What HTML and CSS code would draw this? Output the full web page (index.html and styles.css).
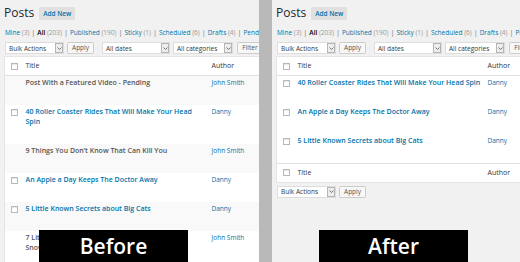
FILE: index.html
```html
<!DOCTYPE html>
<html lang="en">
<head>
    <meta charset="UTF-8">
    <title>Posts - Before / After</title>
    <link rel="stylesheet" href="styles.css">
</head>
<body>
<div class="shot">
    <section class="panel before">
        <div class="wrap">
            <div class="page-head">
                <h1>Posts</h1>
                <a class="add-new">Add New</a>
            </div>
            <div class="subsubsub">
                <a>Mine <span class="count">(3)</span></a><span class="sep">|</span>
                <a class="current">All <span class="count">(203)</span></a><span class="sep">|</span>
                <a>Published <span class="count">(190)</span></a><span class="sep">|</span>
                <a>Sticky <span class="count">(1)</span></a><span class="sep">|</span>
                <a>Scheduled <span class="count">(6)</span></a><span class="sep">|</span>
                <a>Drafts <span class="count">(4)</span></a><span class="sep">|</span>
                <a>Pending <span class="count">(2)</span></a>
            </div>
            <div class="tablenav">
                <div class="select bulk">Bulk Actions<span class="arrow"><svg width="5" height="3" viewBox="0 0 5 3"><path d="M0.5 0.5L2.5 2.5L4.5 0.5" fill="none" stroke="#555" stroke-width="0.8"/></svg></span></div>
                <div class="button apply">Apply</div>
                <div class="select dates">All dates<span class="arrow"><svg width="5" height="3" viewBox="0 0 5 3"><path d="M0.5 0.5L2.5 2.5L4.5 0.5" fill="none" stroke="#555" stroke-width="0.8"/></svg></span></div>
                <div class="select cats">All categories<span class="arrow"><svg width="5" height="3" viewBox="0 0 5 3"><path d="M0.5 0.5L2.5 2.5L4.5 0.5" fill="none" stroke="#555" stroke-width="0.8"/></svg></span></div>
                <div class="button filter">Filter</div>
            </div>
            <table class="posts striped">
                <colgroup><col class="col-cb"><col class="col-title"><col class="col-author"><col></colgroup>
                <thead>
                    <tr><th class="check"><input type="checkbox"></th><th>Title</th><th>Author</th><th>Categories</th></tr>
                </thead>
                <tbody>
                    <tr><td class="check"></td><td class="title"><strong class="locked">Post With a Featured Video - Pending</strong><div class="row-actions"></div></td><td class="author"><a>John Smith</a></td><td></td></tr>
                    <tr><td class="check"><input type="checkbox"></td><td class="title"><strong><a>40 Roller Coaster Rides That Will Make Your Head Spin</a></strong><div class="row-actions"></div></td><td class="author"><a>Danny</a></td><td></td></tr>
                    <tr><td class="check"></td><td class="title"><strong class="locked">9 Things You Don’t Know That Can Kill You</strong><div class="row-actions"></div></td><td class="author"><a>John Smith</a></td><td></td></tr>
                    <tr><td class="check"><input type="checkbox"></td><td class="title"><strong><a>An Apple a Day Keeps The Doctor Away</a></strong><div class="row-actions"></div></td><td class="author"><a>Danny</a></td><td></td></tr>
                    <tr><td class="check"><input type="checkbox"></td><td class="title"><strong><a>5 Little Known Secrets about Big Cats</a></strong><div class="row-actions"></div></td><td class="author"><a>Danny</a></td><td></td></tr>
                    <tr><td class="check"></td><td class="title"><strong class="locked">7 Little Known Facts About Being Caught in a Snowstorm</strong><div class="row-actions"></div></td><td class="author"><a>John Smith</a></td><td></td></tr>
                </tbody>
            </table>
        </div>
        <div class="label">Before</div>
    </section>

    <div class="divider"></div>

    <section class="panel after">
        <div class="wrap">
            <div class="page-head">
                <h1>Posts</h1>
                <a class="add-new">Add New</a>
            </div>
            <div class="subsubsub">
                <a>Mine <span class="count">(3)</span></a><span class="sep">|</span>
                <a class="current">All <span class="count">(203)</span></a><span class="sep">|</span>
                <a>Published <span class="count">(190)</span></a><span class="sep">|</span>
                <a>Sticky <span class="count">(1)</span></a><span class="sep">|</span>
                <a>Scheduled <span class="count">(6)</span></a><span class="sep">|</span>
                <a>Drafts <span class="count">(4)</span></a><span class="sep">|</span>
                <a>Pending <span class="count">(2)</span></a>
            </div>
            <div class="tablenav">
                <div class="select bulk">Bulk Actions<span class="arrow"><svg width="5" height="3" viewBox="0 0 5 3"><path d="M0.5 0.5L2.5 2.5L4.5 0.5" fill="none" stroke="#555" stroke-width="0.8"/></svg></span></div>
                <div class="button apply">Apply</div>
                <div class="select dates">All dates<span class="arrow"><svg width="5" height="3" viewBox="0 0 5 3"><path d="M0.5 0.5L2.5 2.5L4.5 0.5" fill="none" stroke="#555" stroke-width="0.8"/></svg></span></div>
                <div class="select cats">All categories<span class="arrow"><svg width="5" height="3" viewBox="0 0 5 3"><path d="M0.5 0.5L2.5 2.5L4.5 0.5" fill="none" stroke="#555" stroke-width="0.8"/></svg></span></div>
                <div class="button filter">Filter</div>
            </div>
            <table class="posts">
                <colgroup><col class="col-cb"><col class="col-title"><col class="col-author"><col></colgroup>
                <thead>
                    <tr><th class="check"><input type="checkbox"></th><th>Title</th><th>Author</th><th>Categories</th></tr>
                </thead>
                <tbody>
                    <tr><td class="check"><input type="checkbox"></td><td class="title"><strong><a>40 Roller Coaster Rides That Will Make Your Head Spin</a></strong><div class="row-actions"></div></td><td class="author"><a>Danny</a></td><td></td></tr>
                    <tr><td class="check"><input type="checkbox"></td><td class="title"><strong><a>An Apple a Day Keeps The Doctor Away</a></strong><div class="row-actions"></div></td><td class="author"><a>Danny</a></td><td></td></tr>
                    <tr><td class="check"><input type="checkbox"></td><td class="title"><strong><a>5 Little Known Secrets about Big Cats</a></strong><div class="row-actions"></div></td><td class="author"><a>Danny</a></td><td></td></tr>
                </tbody>
                <tfoot>
                    <tr><th class="check"><input type="checkbox"></th><th>Title</th><th>Author</th><th>Categories</th></tr>
                </tfoot>
            </table>
            <div class="tablenav bottom">
                <div class="select bulk">Bulk Actions<span class="arrow"><svg width="5" height="3" viewBox="0 0 5 3"><path d="M0.5 0.5L2.5 2.5L4.5 0.5" fill="none" stroke="#555" stroke-width="0.8"/></svg></span></div>
                <div class="button apply">Apply</div>
            </div>
        </div>
        <div class="label">After</div>
    </section>
</div>
</body>
</html>
```

FILE: styles.css
```css
body {
    margin: 0;
    font-family: "Open Sans", sans-serif;
    font-size: 7px;
    color: #444;
}
.shot {
    display: flex;
    width: 520px;
    height: 262px;
    overflow: hidden;
}
.panel {
    position: relative;
    overflow: hidden;
    background: #f1f1f1;
}
.before {
    width: 259px;
}
.divider {
    width: 13px;
    background: #b9b9b9;
}
.after {
    flex: 1;
}
.wrap {
    width: 480px;
    padding-left: 4px;
}
.page-head {
    display: flex;
    align-items: center;
    gap: 5px;
    height: 14px;
    margin-top: 6px;
}
h1 {
    margin: 0;
    font-size: 12px;
    font-weight: 400;
    line-height: 14px;
    color: #23282d;
}
.add-new {
    height: 13px;
    line-height: 13px;
    padding: 0 4px;
    background: #e0e0e0;
    color: #0073aa;
    font-size: 6.5px;
    font-weight: 600;
    border-radius: 1px;
}
.subsubsub {
    display: flex;
    margin: 8px 0 0 1px;
    height: 10px;
    line-height: 10px;
    font-size: 6.5px;
    white-space: nowrap;
}
.subsubsub a {
    color: #0073aa;
}
.subsubsub a.current {
    color: #000;
    font-weight: 600;
}
.count {
    color: #999;
    font-weight: 400;
}
.sep {
    color: #666;
    margin: 0 2.2px;
}
.tablenav {
    display: flex;
    height: 12px;
    margin: 4px 0 0 1px;
    font-size: 6.5px;
    color: #32373c;
}
.tablenav.bottom {
    margin-top: 3px;
}
.select {
    display: flex;
    align-items: center;
    justify-content: space-between;
    box-sizing: border-box;
    height: 12px;
    padding-left: 3px;
    background: #fff;
    border: 1px solid #ddd;
    white-space: nowrap;
}
.select .arrow {
    display: flex;
    align-items: center;
    justify-content: center;
    box-sizing: border-box;
    width: 8px;
    height: 10px;
    background: #ededed;
    border: 1px solid #b5b5b5;
}
.button {
    box-sizing: border-box;
    height: 12px;
    line-height: 10px;
    text-align: center;
    background: #f7f7f7;
    border: 1px solid #ccc;
    border-radius: 1.5px;
    color: #555;
}
.bulk {
    width: 59px;
}
.apply {
    width: 27px;
    margin-left: 3px;
}
.dates {
    width: 68px;
    margin-left: 8px;
}
.cats {
    width: 60px;
    margin-left: 3px;
}
.filter {
    width: 26px;
    margin-left: 4px;
}
.posts {
    margin-top: 2px;
    width: 470px;
    table-layout: fixed;
    border-collapse: collapse;
    background: #fff;
    border: 1px solid #e5e5e5;
}
.col-cb {
    width: 18px;
}
.before .col-title {
    width: 186px;
}
.after .col-title {
    width: 190px;
}
.col-author {
    width: 60px;
}
.posts th {
    padding: 4px 3px;
    line-height: 10px;
    text-align: left;
    font-weight: 400;
    font-size: 7px;
    color: #32373c;
    border-bottom: 1px solid #e1e1e1;
}
.posts tfoot th {
    padding: 3.5px 3px 4px;
    border-bottom: none;
    border-top: 1px solid #e1e1e1;
}
.posts td {
    vertical-align: top;
    padding: 2px 3px 4px;
    line-height: 10px;
}
.posts .check {
    padding: 0 0 0 6px;
    vertical-align: middle;
}
.posts td.check {
    vertical-align: top;
    padding-top: 1.5px;
}
.striped tbody tr:nth-child(odd) {
    background: #f9f9f9;
}
input[type="checkbox"] {
    appearance: none;
    display: block;
    margin: 0;
    width: 7px;
    height: 7px;
    background: #fff;
    border: 1px solid #b4b9be;
    box-shadow: inset 0 1px 1px rgba(0, 0, 0, 0.1);
}
.posts td.check input {
    margin-top: 2px;
}
.title {
    padding-right: 10px;
}
.title strong {
    display: block;
    font-size: 7px;
    font-weight: 600;
}
.title a {
    color: #0073aa;
}
.title .locked {
    color: #555;
}
.row-actions {
    height: 13px;
}
.author {
    font-size: 6.5px;
}
.author a {
    color: #0073aa;
}
.label {
    position: absolute;
    bottom: 0;
    width: 149px;
    height: 32px;
    display: flex;
    align-items: center;
    justify-content: center;
    background: #000;
    color: #fff;
    font-size: 21px;
    font-weight: 600;
}
.before .label {
    left: 39px;
}
.after .label {
    left: 47px;
}
```
